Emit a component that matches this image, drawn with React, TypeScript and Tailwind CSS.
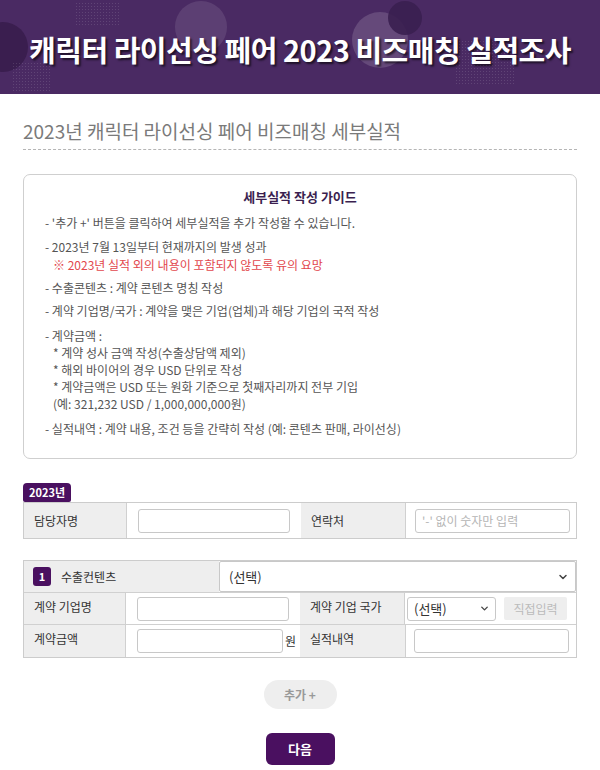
import React from 'react';
import { ChevronDown } from 'lucide-react';

const font = { fontFamily: '"Noto Sans CJK KR", "Noto Sans", sans-serif' };

function Header() {
  return (
    <div className="relative h-[94px] overflow-hidden bg-[#4a2a63]">
      <div className="absolute left-[175px] top-[1px] h-[52px] w-[52px] rounded-full bg-white/10" />
      <div className="absolute left-[-22px] top-[22px] h-[50px] w-[50px] rounded-full bg-[#3a1e4f]" />
      <div className="absolute left-[352px] top-[12px] h-[56px] w-[56px] rounded-full bg-white/15" />
      <div className="absolute left-[388px] top-[1px] h-[34px] w-[34px] rounded-full bg-[#3a1f50]/90" />
      <div className="absolute left-[75px] top-[2px] h-[24px] w-[45px] bg-[radial-gradient(circle,rgba(255,255,255,0.12)_1px,transparent_1px)] bg-[length:3px_3px]" />
      <div className="absolute left-[12px] top-[62px] h-[30px] w-[40px] bg-[radial-gradient(circle,rgba(255,255,255,0.12)_1px,transparent_1px)] bg-[length:3px_3px]" />
      <div className="absolute left-[455px] top-[40px] h-[45px] w-[60px] bg-[radial-gradient(circle,rgba(255,255,255,0.12)_1px,transparent_1px)] bg-[length:3px_3px]" />
      <div className="relative flex h-full items-center justify-center pt-[6px]">
        <h1 className="text-[29px] font-bold tracking-[-0.5px] text-white [text-shadow:2px_2px_2px_rgba(0,0,0,0.6)]">
          캐릭터 라이선싱 페어 2023 비즈매칭 실적조사
        </h1>
      </div>
    </div>
  );
}

function Guide() {
  return (
    <div className="mt-[24px] rounded-[7px] border border-[#cfcfcf] px-[21px] pb-[21px] pt-[13px] text-[12px] leading-[17px] text-[#555]">
      <div className="mb-[9px] text-center text-[13px] font-bold text-[#3b1f50]">세부실적 작성 가이드</div>
      <p>- '추가 +' 버튼을 클릭하여 세부실적을 추가 작성할 수 있습니다.</p>
      <p className="mt-[7px]">- 2023년 7월 13일부터 현재까지의 발생 성과</p>
      <p className="mt-[1px] pl-[8px] text-[#e2474d]">※ 2023년 실적 외의 내용이 포함되지 않도록 유의 요망</p>
      <p className="mt-[6px]">- 수출콘텐츠 : 계약 콘텐츠 명칭 작성</p>
      <p className="mt-[6px]">- 계약 기업명/국가 : 계약을 맺은 기업(업체)과 해당 기업의 국적 작성</p>
      <p className="mt-[8px]">- 계약금액 :</p>
      <p className="pl-[8px]">* 계약 성사 금액 작성(수출상담액 제외)</p>
      <p className="pl-[8px]">* 해외 바이어의 경우 USD 단위로 작성</p>
      <p className="pl-[8px]">* 계약금액은 USD 또는 원화 기준으로 첫째자리까지 전부 기입</p>
      <p className="pl-[8px]">(예: 321,232 USD / 1,000,000,000원)</p>
      <p className="mt-[8px]">- 실적내역 : 계약 내용, 조건 등을 간략히 작성 (예: 콘텐츠 판매, 라이선싱)</p>
    </div>
  );
}

function Label({ children, right = true, top = 9 }: { children: React.ReactNode; right?: boolean; top?: number }) {
  return (
    <div
      className={`bg-[#eeeeee] px-[10px] text-[12px] leading-[17px] text-[#333] ${top === 9 ? 'pt-[9px]' : 'pt-[5px]'} ${right ? 'border-r border-[#d0d0d0]' : ''}`}
    >
      {children}
    </div>
  );
}

function TextInput({ placeholder, className = '' }: { placeholder?: string; className?: string }) {
  return (
    <input
      placeholder={placeholder}
      className={`h-[24px] rounded-[3px] border border-[#c8c8c8] bg-white px-[6px] text-[12px] outline-none placeholder:text-[#b5b5b5] ${className}`}
      style={font}
    />
  );
}

export default function App() {
  return (
    <div className="min-h-[770px] w-[600px] bg-white" style={font}>
      <Header />
      <div className="px-[23px]">
        <h2 className="mt-[24px] text-[19px] font-normal leading-[26px] text-[#7a7a7a]">
          2023년 캐릭터 라이선싱 페어 비즈매칭 세부실적
        </h2>
        <div className="mt-[5px] border-t border-dashed border-[#b5b5b5]" />
        <Guide />

        <div className="mt-[24px]">
          <div className="w-fit rounded-t-[4px] rounded-b-[2px] bg-[#4a1060] px-[6px] text-[11px] font-bold leading-[19px] text-white">
            2023년
          </div>
          <div className="grid h-[37px] grid-cols-[103px_174px_105px_1fr] border border-[#cccccc]">
            <Label>담당자명</Label>
            <div className="flex items-center px-[11px]">
              <TextInput className="w-[153px]" />
            </div>
            <Label>연락처</Label>
            <div className="flex items-center px-[9px]">
              <TextInput className="w-[155px]" placeholder="'-' 없이 숫자만 입력" />
            </div>
          </div>
        </div>

        <div className="mt-[21px] border border-[#cccccc]">
          <div className="flex h-[31px]">
            <div className="flex w-[195px] items-center gap-[10px] bg-[#eeeeee] px-[9px]">
              <span className="flex h-[19px] w-[18px] items-center justify-center rounded-[3px] bg-[#4a1060] text-[11px] font-bold text-white">
                1
              </span>
              <span className="text-[12px] text-[#333]">수출컨텐츠</span>
            </div>
            <div className="flex flex-1 items-center justify-between rounded-[2px] border border-[#c8c8c8] bg-white pl-[9px] pr-[6px] text-[13px] text-[#333]">
              <span>(선택)</span>
              <ChevronDown size={12} strokeWidth={3} className="text-[#444]" />
            </div>
          </div>
          <div className="grid h-[32px] grid-cols-[102px_174px_105px_1fr] border-t border-[#d0d0d0]">
            <Label top={5}>계약 기업명</Label>
            <div className="flex items-center px-[11px]">
              <TextInput className="w-[153px]" />
            </div>
            <Label top={5}>계약 기업 국가</Label>
            <div className="flex items-center gap-[8px] px-[2px]">
              <div className="flex h-[24px] w-[89px] items-center justify-between rounded-[3px] border border-[#c8c8c8] pl-[6px] pr-[5px] text-[13px] text-[#333]">
                <span>(선택)</span>
                <ChevronDown size={11} strokeWidth={3} className="text-[#444]" />
              </div>
              <span className="flex h-[23px] w-[63px] items-center justify-center rounded-[2px] bg-[#eeeeee] text-[12px] text-[#bbbbbb]">
                직접입력
              </span>
            </div>
          </div>
          <div className="grid h-[33px] grid-cols-[102px_174px_105px_1fr] border-t border-[#d0d0d0]">
            <Label top={5}>계약금액</Label>
            <div className="flex items-center gap-[2px] pl-[11px]">
              <TextInput className="w-[146px]" />
              <span className="text-[12px] text-[#333]">원</span>
            </div>
            <Label right={false} top={5}>실적내역</Label>
            <div className="flex items-center border-l border-[#d0d0d0] px-[8px]">
              <TextInput className="w-[155px]" />
            </div>
          </div>
        </div>

        <div className="mt-[22px] flex justify-center">
          <button className="h-[29px] w-[73px] rounded-full bg-[#eeeeee] text-[12px] font-bold text-[#999]">추가 +</button>
        </div>
        <div className="mt-[24px] flex justify-center">
          <button className="h-[32px] w-[69px] rounded-[6px] bg-[#4a1060] text-[13px] font-bold text-white">다음</button>
        </div>
      </div>
    </div>
  );
}
